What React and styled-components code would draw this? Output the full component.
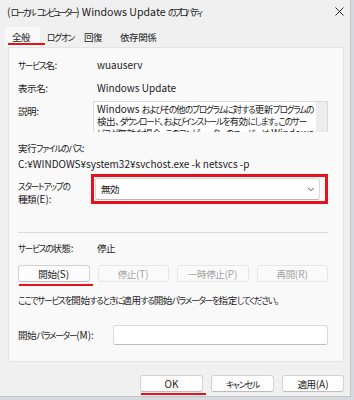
import React from "react";
import styled, { createGlobalStyle, css } from "styled-components";

const GlobalStyle = createGlobalStyle`
  html, body { margin: 0; padding: 0; background: #d6d9dd; }
  body {
    font-family: "Noto Sans CJK JP", "Noto Sans", sans-serif;
    font-size: 9.5px;
    color: #1b1b1b;
    font-feature-settings: "palt";
  }
  #root { width: 354px; height: 400px; overflow: hidden; }
`;

/* text runs: kana are set narrower, as in Yu Gothic UI */
const Kana = styled.span`
  font-size: ${(p) => (p.$title ? 8.8 : 8.6)}px;
  letter-spacing: ${(p) => (p.$title ? -2.5 : -1.2)}px;
`;
const Han = styled.span`
  font-size: ${(p) => (p.$title ? 10 : 9.5)}px;
  letter-spacing: -0.4px;
`;
const En = styled.span`
  font-size: ${(p) => (p.$title ? 10.6 : 10)}px;
  letter-spacing: 0;
`;

function T({ children, title }) {
  const parts = String(children).split(/([\u3040-\u30ff]+|[\x20-\x7e\u00a5]+)/);
  return parts.filter(Boolean).map((p, i) => {
    if (/^[\u3040-\u30ff]+$/.test(p))
      return (
        <Kana key={i} $title={title}>
          {p}
        </Kana>
      );
    if (/^[\x20-\x7e\u00a5]+$/.test(p))
      return (
        <En key={i} $title={title}>
          {p}
        </En>
      );
    return (
      <Han key={i} $title={title}>
        {p}
      </Han>
    );
  });
}

const Window = styled.div`
  width: 351px;
  height: 397px;
  background: #f0f0f0;
  border-right: 1px solid #c4c4c4;
  border-bottom: 1px solid #c4c4c4;
  box-sizing: border-box;
  display: flex;
  flex-direction: column;
`;

const TitleBar = styled.div`
  height: 22px;
  display: flex;
  align-items: center;
  justify-content: space-between;
  padding: 0 6px 0 7px;
  white-space: nowrap;
`;

const Tabs = styled.div`
  display: flex;
  height: 20px;
  margin-top: 5px;
  padding-left: 5px;
`;

const Tab = styled.div`
  position: relative;
  width: ${(p) => p.$w}px;
  padding-left: 7px;
  box-sizing: border-box;
  display: flex;
  align-items: center;
  white-space: nowrap;
  border-radius: 3px 3px 0 0;
  ${(p) =>
    p.$active &&
    css`
      background: #f9f9f9;
    `}
`;

const Mark = styled.span`
  position: absolute;
  left: ${(p) => p.$left}px;
  width: ${(p) => p.$width}px;
  bottom: ${(p) => p.$bottom}px;
  height: 2px;
  background: #e8101a;
`;

const Panel = styled.div`
  margin: 0 6px 0 8px;
  height: 315px;
  border: 1px solid #e3e3e3;
  background: #f9f9f9;
  box-sizing: border-box;
  padding: 9px 15px 0 9px;
  display: flex;
  flex-direction: column;
`;

const Row = styled.div`
  display: grid;
  grid-template-columns: ${(p) => p.$label || 75}px 1fr;
  align-items: ${(p) => p.$align || "center"};
  margin-top: ${(p) => p.$mt || 0}px;
  min-height: 16px;
`;

const Label = styled.div`
  line-height: ${(p) => p.$lh || 16}px;
  padding-top: ${(p) => p.$pt || 0}px;
  white-space: nowrap;
`;

const Value = styled.div`
  padding-left: 4px;
  line-height: 16px;
`;

const DescBox = styled.div`
  height: 31px;
  display: flex;
  background: #ffffff;
  border: 1px solid #d9d9d9;
  border-bottom: none;
  box-sizing: border-box;
  overflow: hidden;
`;

const DescText = styled.div`
  flex: 1;
  padding: 1px 0 0 3px;
  line-height: 11.5px;
  white-space: nowrap;
  overflow: hidden;
`;

const ScrollTrack = styled.div`
  width: 11px;
  background: #ececec;
`;

const Line = styled.div`
  line-height: 15px;
  margin-top: ${(p) => p.$mt || 0}px;
  white-space: nowrap;
`;

const Highlight = styled.div`
  margin-left: -2px;
  border: 3px solid #e8101a;
  padding: 1px 5px 1px 1px;
`;

const Select = styled.div`
  height: 22px;
  background: #ffffff;
  border: 1px solid #dadada;
  border-bottom-color: #b8b8b8;
  border-radius: 3px;
  box-sizing: border-box;
  display: flex;
  align-items: center;
  justify-content: space-between;
  padding: 0 4px 0 5px;
`;

const Separator = styled.div`
  height: 1px;
  width: 310px;
  background: #dadada;
  margin-top: 27px;
`;

const ButtonRow = styled.div`
  display: grid;
  grid-template-columns: repeat(4, 1fr);
  gap: 8px;
  margin-top: 9px;
`;

const Button = styled.div`
  position: relative;
  height: 17px;
  width: ${(p) => (p.$w ? p.$w + "px" : "auto")};
  box-sizing: border-box;
  border: 1px solid ${(p) => (p.$disabled ? "#e6e6e6" : "#d3d3d3")};
  border-bottom-color: ${(p) => (p.$disabled ? "#e6e6e6" : "#bdbdbd")};
  border-radius: 3px;
  background: ${(p) => (p.$disabled ? "#fafafa" : "#fdfdfd")};
  color: ${(p) => (p.$disabled ? "#a3a3a3" : "#1b1b1b")};
  display: flex;
  align-items: center;
  justify-content: center;
  white-space: nowrap;
`;

const Note = styled.div`
  margin-top: 11px;
  line-height: 14px;
  white-space: nowrap;
  letter-spacing: 0.3px;
`;

const Input = styled.div`
  height: 20px;
  background: #ffffff;
  border: 1px solid #dadada;
  border-bottom-color: #bcbcbc;
  border-radius: 3px;
  box-sizing: border-box;
`;

const Footer = styled.div`
  display: flex;
  justify-content: flex-end;
  gap: 8px;
  margin-top: 13px;
  padding-right: 6px;
`;

export default function App() {
  return (
    <>
      <GlobalStyle />
      <Window>
        <TitleBar>
          <span>
            <T title>(ローカル コンピューター) Windows Update のプロパティ</T>
          </span>
          <svg width="9" height="9" viewBox="0 0 9 9">
            <path d="M0.5 0.5L8.5 8.5M8.5 0.5L0.5 8.5" stroke="#2b2b2b" strokeWidth="1" fill="none" />
          </svg>
        </TitleBar>
        <Tabs>
          <Tab $w={35} $active>
            <T>全般</T>
            <Mark $left={3} $width={37} $bottom={2} />
          </Tab>
          <Tab $w={37}>
            <T>ログオン</T>
          </Tab>
          <Tab $w={36}>
            <T>回復</T>
          </Tab>
          <Tab $w={60}>
            <T>依存関係</T>
          </Tab>
        </Tabs>
        <Panel>
          <Row>
            <Label>
              <T>サービス名:</T>
            </Label>
            <Value>
              <T>wuauserv</T>
            </Value>
          </Row>
          <Row $mt={7}>
            <Label>
              <T>表示名:</T>
            </Label>
            <Value>
              <T>Windows Update</T>
            </Value>
          </Row>
          <Row $mt={5} $align="start">
            <Label $pt={3} $lh={14}>
              <T>説明:</T>
            </Label>
            <DescBox>
              <DescText>
                <div>
                  <T>Windows およびその他のプログラムに対する更新プログラムの</T>
                </div>
                <div>
                  <T>検出、ダウンロード、およびインストールを有効にします。このサー</T>
                </div>
                <div>
                  <T>ビスが無効な場合、このコンピューターのユーザーは Windows</T>
                </div>
              </DescText>
              <ScrollTrack />
            </DescBox>
          </Row>
          <Line $mt={8}>
            <T>実行ファイルのパス:</T>
          </Line>
          <Line>
            <T>C:¥WINDOWS¥system32¥svchost.exe -k netsvcs -p</T>
          </Line>
          <Row $mt={2} $align="start">
            <Label $pt={7} $lh={11.5}>
              <T>スタートアップの</T>
              <br />
              <T>種類(E):</T>
            </Label>
            <Highlight>
              <Select>
                <span>
                  <T>無効</T>
                </span>
                <svg width="8" height="5" viewBox="0 0 8 5">
                  <path d="M1 0.8L4 3.8L7 0.8" stroke="#5a5a5a" strokeWidth="1" fill="none" />
                </svg>
              </Select>
            </Highlight>
          </Row>
          <Separator />
          <Row $mt={7}>
            <Label>
              <T>サービスの状態:</T>
            </Label>
            <Value>
              <T>停止</T>
            </Value>
          </Row>
          <ButtonRow>
            <Button>
              <T>開始(S)</T>
              <Mark $left={0} $width={74} $bottom={-5} />
            </Button>
            <Button $disabled>
              <T>停止(T)</T>
            </Button>
            <Button $disabled>
              <T>一時停止(P)</T>
            </Button>
            <Button $disabled>
              <T>再開(R)</T>
            </Button>
          </ButtonRow>
          <Note>
            <T>ここでサービスを開始するときに適用する開始パラメーターを指定してください。</T>
          </Note>
          <Row $mt={18} $label={95}>
            <Label>
              <T>開始パラメーター(M):</T>
            </Label>
            <Input />
          </Row>
        </Panel>
        <Footer>
          <Button $w={63}>
            <T>OK</T>
            <Mark $left={0} $width={65} $bottom={-4} />
          </Button>
          <Button $w={63}>
            <T>キャンセル</T>
          </Button>
          <Button $w={62}>
            <T>適用(A)</T>
          </Button>
        </Footer>
      </Window>
    </>
  );
}
